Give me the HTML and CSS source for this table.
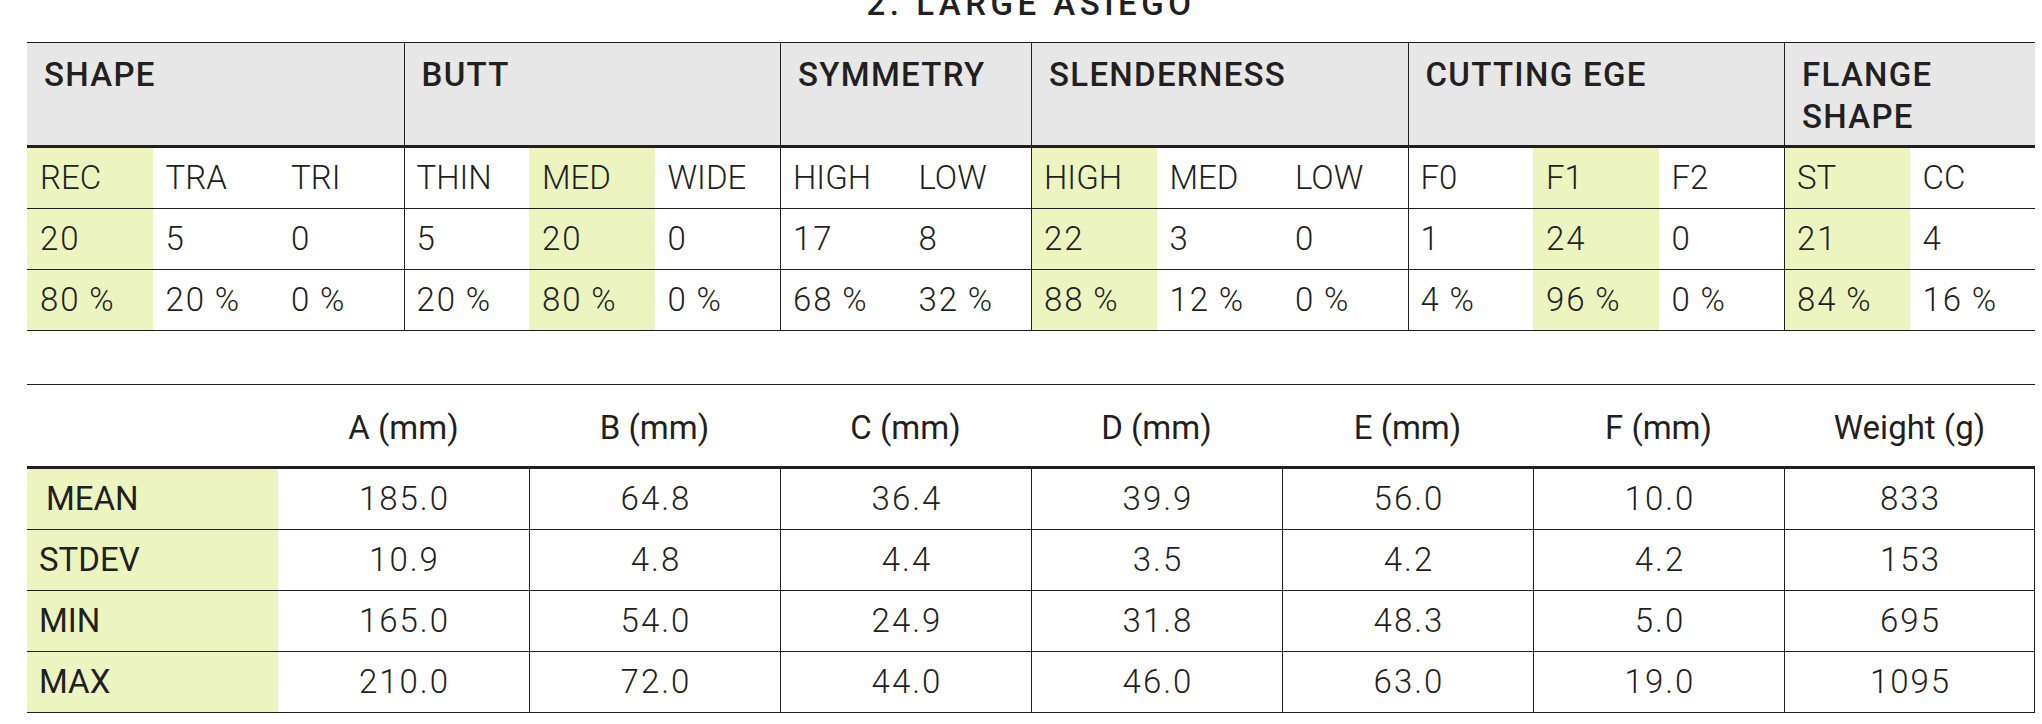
FILE: index.html
```html
<!DOCTYPE html>
<html lang="en">
<head>
<meta charset="utf-8">
<title>2. Large Asiego</title>
<link rel="stylesheet" href="styles.css">
</head>
<body>
<div class="page">
  <h1 class="title">2. LARGE ASIEGO</h1>

  <div class="counts">
    <div class="row">
      <div class="gh s3">SHAPE</div>
      <div class="gh s3 g">BUTT</div>
      <div class="gh s2 g">SYMMETRY</div>
      <div class="gh s3 g">SLENDERNESS</div>
      <div class="gh s3 g">CUTTING EGE</div>
      <div class="gh s2 g">FLANGE<br>SHAPE</div>
    </div>

    <div class="row">
      <div class="c hl">REC</div><div class="c">TRA</div><div class="c">TRI</div>
      <div class="c g">THIN</div><div class="c hl">MED</div><div class="c">WIDE</div>
      <div class="c g">HIGH</div><div class="c">LOW</div>
      <div class="c g hl">HIGH</div><div class="c">MED</div><div class="c">LOW</div>
      <div class="c g">F0</div><div class="c hl">F1</div><div class="c">F2</div>
      <div class="c g hl">ST</div><div class="c">CC</div>
    </div>

    <div class="row nums">
      <div class="c hl">20</div><div class="c">5</div><div class="c">0</div>
      <div class="c g">5</div><div class="c hl">20</div><div class="c">0</div>
      <div class="c g">17</div><div class="c">8</div>
      <div class="c g hl">22</div><div class="c">3</div><div class="c">0</div>
      <div class="c g">1</div><div class="c hl">24</div><div class="c">0</div>
      <div class="c g hl">21</div><div class="c">4</div>
    </div>

    <div class="row nums">
      <div class="c hl">80&#8201;%</div><div class="c">20&#8201;%</div><div class="c">0&#8201;%</div>
      <div class="c g">20&#8201;%</div><div class="c hl">80&#8201;%</div><div class="c">0&#8201;%</div>
      <div class="c g">68&#8201;%</div><div class="c">32&#8201;%</div>
      <div class="c g hl">88&#8201;%</div><div class="c">12&#8201;%</div><div class="c">0&#8201;%</div>
      <div class="c g">4&#8201;%</div><div class="c hl">96&#8201;%</div><div class="c">0&#8201;%</div>
      <div class="c g hl">84&#8201;%</div><div class="c">16&#8201;%</div>
    </div>
  </div>

  <div class="stats">
    <div class="row">
      <div class="sh"></div>
      <div class="sh">A (mm)</div>
      <div class="sh">B (mm)</div>
      <div class="sh">C (mm)</div>
      <div class="sh">D (mm)</div>
      <div class="sh">E (mm)</div>
      <div class="sh">F (mm)</div>
      <div class="sh">Weight (g)</div>
    </div>

    <div class="row">
      <div class="lb indent">MEAN</div>
      <div class="v first">185.0</div><div class="v">64.8</div><div class="v">36.4</div><div class="v">39.9</div><div class="v">56.0</div><div class="v">10.0</div><div class="v last">833</div>
    </div>

    <div class="row">
      <div class="lb">STDEV</div>
      <div class="v first">10.9</div><div class="v">4.8</div><div class="v">4.4</div><div class="v">3.5</div><div class="v">4.2</div><div class="v">4.2</div><div class="v last">153</div>
    </div>

    <div class="row">
      <div class="lb">MIN</div>
      <div class="v first">165.0</div><div class="v">54.0</div><div class="v">24.9</div><div class="v">31.8</div><div class="v">48.3</div><div class="v">5.0</div><div class="v last">695</div>
    </div>

    <div class="row">
      <div class="lb">MAX</div>
      <div class="v first">210.0</div><div class="v">72.0</div><div class="v">44.0</div><div class="v">46.0</div><div class="v">63.0</div><div class="v">19.0</div><div class="v last">1095</div>
    </div>
  </div>
</div>
</body>
</html>
```

FILE: styles.css
```css
* {
  box-sizing: border-box;
}

html, body {
  margin: 0;
  padding: 0;
  background: #ffffff;
}

body {
  font-family: Roboto, "Liberation Sans", Arial, sans-serif;
  color: #231f20;
  overflow: hidden;
}

.page {
  width: 2008px;
  margin-left: 27px;
}

.title {
  margin: -17px 0 17px 0;
  font-size: 33px;
  line-height: 42px;
  font-weight: 500;
  letter-spacing: 4.5px;
  text-align: center;
}

.row {
  display: contents;
}

/* ---------- counts table ---------- */
.counts {
  display: grid;
  grid-template-columns: repeat(16, 1fr);
  border-top: 1px solid #231f20;
  font-size: 33px;
}

.gh {
  height: 105px;
  padding: 11px 0 0 17px;
  line-height: 42px;
  font-weight: 500;
  letter-spacing: 1.3px;
  background: #e7e7e7;
  border-bottom: 3px solid #231f20;
}

.s2 { grid-column: span 2; }
.s3 { grid-column: span 3; }

.g {
  border-left: 1px solid #231f20;
}

.c {
  height: 61px;
  line-height: 60px;
  padding-left: 13px;
  font-weight: 350;
  border-bottom: 1px solid #231f20;
  white-space: nowrap;
}

.c.g {
  padding-left: 12px;
}

.nums .c {
  letter-spacing: 2px;
}

.hl {
  background: #ecf5c0;
}

/* ---------- statistics table ---------- */
.stats {
  display: grid;
  grid-template-columns: repeat(8, 1fr);
  margin-top: 53px;
  border-top: 1px solid #231f20;
  font-size: 33px;
}

.sh {
  height: 84px;
  padding-top: 4px;
  line-height: 77px;
  text-align: center;
  border-bottom: 3px solid #231f20;
}

.lb {
  height: 61px;
  line-height: 60px;
  padding-left: 12px;
  font-weight: 400;
  background: #ecf5c0;
  border-bottom: 1px solid #231f20;
}

.lb.indent {
  padding-left: 19px;
}

.v {
  height: 61px;
  line-height: 60px;
  text-align: center;
  font-weight: 350;
  letter-spacing: 2px;
  text-indent: 2px;
  border-bottom: 1px solid #231f20;
  border-left: 1px solid #231f20;
}

.v.first {
  border-left: none;
}

.v.last {
  border-right: 1px solid #231f20;
}
```
